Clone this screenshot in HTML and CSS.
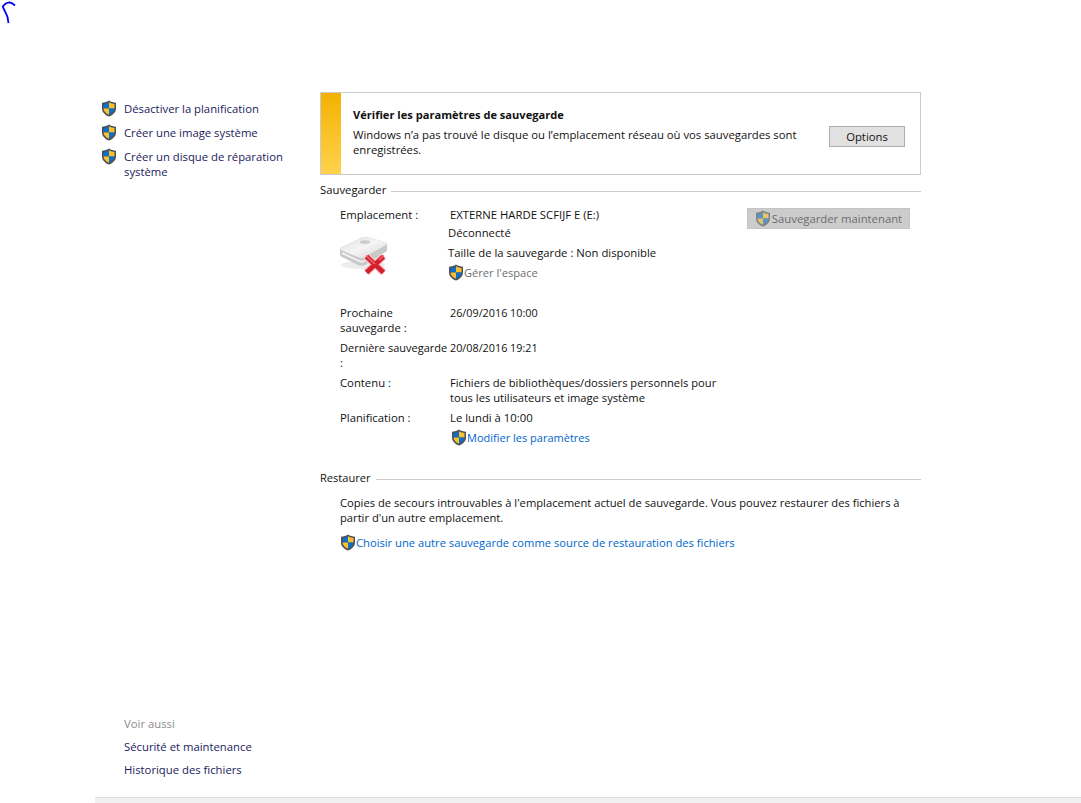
FILE: index.html
```html
<!DOCTYPE html>
<html lang="fr">

<head>
    <meta charset="UTF-8">
    <title>Sauvegarder et restaurer</title>
    <link rel="stylesheet" href="styles.css">
</head>

<body>
    <svg width="0" height="0" class="defs">
        <symbol id="shield" viewBox="0 0 16 17">
            <path d="M8 .5C6 2 3.500 2.600 1 2.700V8.500C1 12.300 4 15 8 16.500C12 15 15 12.300 15 8.500V2.700C12.500 2.600 10 2 8 .5Z" fill="#4d5157"/>
            <path d="M8 2.200C6.200 3.300 4.300 3.800 2.500 4V8.500H8Z" fill="#0f6fc6"/>
            <path d="M8 2.200C9.800 3.300 11.700 3.800 13.500 4V8.500H8Z" fill="#fbc02d"/>
            <path d="M2.500 8.500H8V14.800C5 13.600 2.700 11.500 2.500 8.500Z" fill="#fbc02d"/>
            <path d="M13.500 8.500H8V14.800C11 13.600 13.300 11.500 13.500 8.500Z" fill="#0f6fc6"/>
        </symbol>
    </svg>

    <!-- trait au stylo en haut a gauche -->
    <svg class="scribble" width="18" height="26" viewBox="0 0 18 26">
        <path d="M15 5.500C13 3.500 11 2.500 9.500 2.300C7 2.500 4.500 4 2.800 6.500C4 10 6 13 7.500 17C8 19 8 21 8.500 23" fill="none" stroke="#0000f0" stroke-width="1.800"/>
    </svg>

    <div class="wrapper">
        <div class="side">
            <ul class="tasks">
                <li><svg class="ico"><use href="#shield"/></svg><a>Désactiver la planification</a></li>
                <li><svg class="ico"><use href="#shield"/></svg><a>Créer une image système</a></li>
                <li><svg class="ico"><use href="#shield"/></svg><a>Créer un disque de réparation système</a></li>
            </ul>
            <div class="seeAlso">
                <p class="seeTitle">Voir aussi</p>
                <a>Sécurité et maintenance</a>
                <a>Historique des fichiers</a>
            </div>
        </div>

        <div class="main">
            <div class="notice">
                <div class="strip"></div>
                <div class="noticeText">
                    <p class="noticeTitle">Vérifier les paramètres de sauvegarde</p>
                    <p>Windows n’a pas trouvé le disque ou l’emplacement réseau où vos sauvegardes sont enregistrées.</p>
                </div>
                <span class="btn">Options</span>
            </div>

            <div class="secHead"><span>Sauvegarder</span></div>
            <div class="backup">
                <div class="rows">
                    <div class="row locRow">
                        <div class="label">
                            <p>Emplacement :</p>
                            <svg class="disk" width="50" height="42" viewBox="0 0 50 42">
                                <defs>
                                    <linearGradient id="diskTop" x1="0" y1="0" x2="1" y2="1">
                                        <stop offset="0" stop-color="#dedede"/>
                                        <stop offset=".5" stop-color="#f5f5f5"/>
                                        <stop offset="1" stop-color="#d6d6d6"/>
                                    </linearGradient>
                                </defs>
                                <ellipse cx="24" cy="29" rx="22" ry="4" fill="#ececec"/>
                                <path d="M1 12L23 1.500C25 .8 27 .8 29 1.200L46 6C48 7 48 9 48 10V15L26 29C24 30 22 30 20 29.500L3 21C1 20 1 19 1 17Z" fill="#c9c9c9"/>
                                <path d="M1.500 12L23 1.500C25 1 27 1 29 1.500L46 6C48 7 48 8.500 46 9.500L26 21C24 22 22 22 20 21.500L3 14.500C1.500 14 1 13 1.500 12Z" fill="url(#diskTop)"/>
                                <path d="M3 17L20 25C22 25.800 24 25.800 26 25" fill="none" stroke="#f4f4f4" stroke-width="1.800"/>
                                <ellipse cx="26" cy="6" rx="5" ry="1.800" fill="#cacaca"/>
                                <path d="M27.500 20.500L44.500 36.500M44.500 20.500L27.500 36.500" stroke="#f3c6c8" stroke-width="7.500"/>
                                <path d="M27.500 20.500L44.500 36.500M44.500 20.500L27.500 36.500" stroke="#d4202c" stroke-width="5"/>
                                <path d="M27 19.500L36 28M45 19.500L40 24" stroke="#ee6a72" stroke-width="1.500" fill="none"/>
                            </svg>
                        </div>
                        <div class="value">
                            <p>EXTERNE HARDE SCFIJF E (E:)</p>
                            <div class="locInfo">
                                <p class="state">Déconnecté</p>
                                <p class="size">Taille de la sauvegarde : Non disponible</p>
                                <p class="manage"><svg class="ico"><use href="#shield"/></svg>Gérer l'espace</p>
                            </div>
                        </div>
                    </div>
                    <div class="row">
                        <div class="label">Prochaine sauvegarde :</div>
                        <div class="value date">26/09/2016 10:00</div>
                    </div>
                    <div class="row">
                        <div class="label"><span class="nowrap">Dernière sauvegarde</span> :</div>
                        <div class="value date">20/08/2016 19:21</div>
                    </div>
                    <div class="row">
                        <div class="label">Contenu :</div>
                        <div class="value content">Fichiers de bibliothèques/dossiers personnels pour tous les utilisateurs et image système</div>
                    </div>
                    <div class="row">
                        <div class="label">Planification :</div>
                        <div class="value">
                            <p>Le lundi à 10:00</p>
                            <p class="change"><svg class="ico"><use href="#shield"/></svg><a class="blue">Modifier les paramètres</a></p>
                        </div>
                    </div>
                </div>
                <span class="btn btnOff"><svg class="ico"><use href="#shield"/></svg>Sauvegarder maintenant</span>
            </div>

            <div class="secHead restoreHead"><span>Restaurer</span></div>
            <div class="restore">
                <p>Copies de secours introuvables à l'emplacement actuel de sauvegarde. Vous pouvez restaurer des fichiers à partir d'un autre emplacement.</p>
                <p class="choose"><svg class="ico"><use href="#shield"/></svg><a class="blue">Choisir une autre sauvegarde comme source de restauration des fichiers</a></p>
            </div>
        </div>
    </div>

    <div class="bottomBar"></div>
</body>

</html>
```

FILE: styles.css
```css
* {
    margin: 0;
    padding: 0;
    list-style: none;
    box-sizing: border-box;
}

body {
    position: relative;
    width: 1081px;
    height: 803px;
    overflow: hidden;
    background: #fff;
    color: #111;
    font: 11.3px/15px "Open Sans", "Noto Sans", sans-serif;
}

.defs {
    display: block;
    position: absolute;
}

.scribble {
    position: absolute;
    left: 0;
    top: 0;
}

.ico {
    display: block;
    flex: none;
    width: 16px;
    height: 17px;
}

.wrapper {
    display: flex;
    height: 797px;
    padding-left: 101px;
}

/* colonne de gauche */
.side {
    display: flex;
    flex-direction: column;
    justify-content: space-between;
    width: 219px;
    padding: 101px 0 20px;
    color: #1b1a5c;
}

.tasks li {
    display: flex;
    gap: 7px;
    margin-bottom: 9px;
    padding-right: 20px;
}

.tasks .ico {
    margin-top: -1px;
    margin-bottom: -1px;
}

.seeAlso {
    display: flex;
    flex-direction: column;
    gap: 8px;
    padding-left: 23px;
}

.seeTitle {
    color: #8b8b8b;
}

/* colonne principale */
.main {
    width: 601px;
    padding-top: 92px;
}

.notice {
    display: flex;
    align-items: center;
    height: 83px;
    padding-right: 15px;
    border: 1px solid #ccc;
}

.strip {
    flex: none;
    align-self: stretch;
    width: 20px;
    background: linear-gradient(#f3b200, #ffd24d);
}

.noticeText {
    flex: none;
    width: 460px;
    margin: 0 16px 3px 12px;
}

.noticeTitle {
    margin-bottom: 5px;
    font-size: 11.1px;
    font-weight: 700;
}

.btn {
    display: flex;
    flex: none;
    align-items: center;
    justify-content: center;
    width: 76px;
    height: 21px;
    margin-top: 5px;
    background: #e1e1e1;
    border: 1px solid #adadad;
}

.btnOff {
    gap: 1px;
    width: 163px;
    margin: 1px 11px 0 0;
    background: #ccc;
    border-color: #c4c4c4;
    color: #6d6d6d;
}

.btnOff .ico {
    opacity: .6;
}

.secHead {
    display: flex;
    align-items: center;
    gap: 5px;
    margin-top: 7px;
}

.secHead::after {
    content: "";
    flex: 1;
    height: 1px;
    margin-top: 3px;
    background: #ccc;
}

.restoreHead {
    margin-top: 24px;
    font-size: 11.1px;
}

.backup {
    display: flex;
    justify-content: space-between;
    margin-top: 10px;
    padding-left: 20px;
}

.rows {
    display: flex;
    flex-direction: column;
    gap: 5px;
}

.row {
    display: flex;
}

.label {
    width: 110px;
    flex: none;
}

.nowrap {
    font-size: 11px;
    white-space: nowrap;
}

.value {
    width: 272px;
}

.date {
    font-size: 10.8px;
}

.content {
    font-size: 11.2px;
}

.disk {
    display: block;
    margin: 14px 0 0 -1px;
}

.locInfo {
    margin-left: -2px;
}

.state {
    margin-top: 3px;
}

.size {
    margin-top: 5px;
}

.manage,
.change {
    display: flex;
    align-items: center;
    height: 17px;
    margin-top: 4px;
}

.manage {
    margin-bottom: 19px;
    font-size: 11.1px;
    color: #6d6d6d;
}

.change {
    margin-left: 1px;
    font-size: 11px;
}

.blue {
    color: #0066cc;
}

.restore {
    padding: 10px 15px 0 20px;
    font-size: 11.2px;
}

.choose {
    display: flex;
    align-items: center;
    margin-top: 9px;
}

.bottomBar {
    height: 6px;
    margin-left: 95px;
    background: #f0f0f0;
    border-top: 1px solid #ddd;
}
```
